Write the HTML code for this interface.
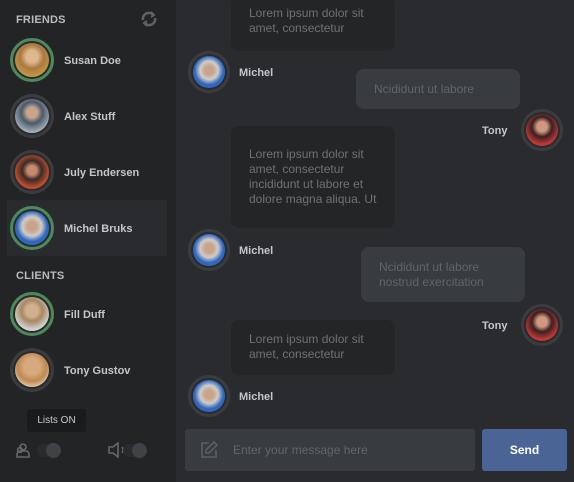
<!DOCTYPE html>
<html><head><meta charset="utf-8"><style>
*{margin:0;padding:0;box-sizing:border-box}
body{width:574px;height:482px;background:#2a2b2e;font-family:"Liberation Sans",sans-serif;position:relative;overflow:hidden}
.side{position:absolute;left:0;top:0;width:176px;height:482px;background:#232426}
.h{position:absolute;left:16px;font-size:11px;font-weight:bold;color:#b8bcc0;letter-spacing:.2px}
.av{position:absolute;width:44px;height:44px;border-radius:50%;border:3px solid #3a3c3f;background:#2a2b2e;padding:2px}
.av.on{border-color:#4c8a5a}
.av i{display:block;width:100%;height:100%;border-radius:50%}
.nm{position:absolute;font-size:11px;font-weight:bold;color:#c3c6ca}
.bub{position:absolute;font-size:12px;line-height:15px;color:#6e7276;border-radius:8px}
.l{background:#242527;padding:0 18px}
.r{background:#383c40;color:#60656a}
.sm{width:42px;height:42px}
</style></head><body>
<div class="side">
<div class="h" style="top:14px">FRIENDS</div>
<svg style="position:absolute;left:140px;top:10px" width="18" height="18" viewBox="0 0 18 18" fill="none" stroke="#5f6366" stroke-width="2.6"><path d="M3 10A6 6 0 0 1 13 4.5"/><path d="M15 8A6 6 0 0 1 5 13.5"/><path d="M11 2l3 3-3 2" stroke-width="2"/><path d="M7 16l-3-3 3-2" stroke-width="2"/></svg>
<div style="position:absolute;left:7px;top:200px;width:160px;height:56px;background:#2a2b2e"></div>
<div class="av on" style="left:10px;top:38px"><i style="background:radial-gradient(circle at 50% 40%,#e0b890 0 22%,#a87840 45%,#c8a048 80%)"></i></div>
<div class="nm" style="left:64px;top:55px">Susan Doe</div>
<div class="av" style="left:10px;top:94px"><i style="background:radial-gradient(circle at 50% 40%,#c8a48a 0 20%,#4a5a6a 40%,#a8b2ba 75%)"></i></div>
<div class="nm" style="left:64px;top:111px">Alex Stuff</div>
<div class="av" style="left:10px;top:150px"><i style="background:radial-gradient(circle at 50% 45%,#c88a6a 0 18%,#3a2a2a 38%,#c8502a 70%,#901818 90%)"></i></div>
<div class="nm" style="left:64px;top:167px">July Endersen</div>
<div class="av on" style="left:10px;top:206px"><i style="background:radial-gradient(circle at 50% 45%,#c8a48a 0 18%,#d0ccc8 38%,#3068c0 60%)"></i></div>
<div class="nm" style="left:64px;top:223px">Michel Bruks</div>
<div class="h" style="top:270px">CLIENTS</div>
<div class="av on" style="left:10px;top:292px"><i style="background:radial-gradient(circle at 50% 40%,#d0b090 0 22%,#a88860 40%,#d0d0d0 70%)"></i></div>
<div class="nm" style="left:64px;top:309px">Fill Duff</div>
<div class="av" style="left:10px;top:348px"><i style="background:radial-gradient(circle at 50% 40%,#d8a880 0 30%,#c08850 55%,#e0d0b8 80%)"></i></div>
<div class="nm" style="left:64px;top:365px">Tony Gustov</div>
<div style="position:absolute;left:27px;top:409px;width:59px;height:23px;background:#1a1b1c;border-radius:3px;color:#c8cacc;font-size:10px;text-align:center;line-height:23px">Lists ON</div>
<svg style="position:absolute;left:14px;top:441px" width="18" height="18" viewBox="0 0 18 18" fill="none" stroke="#64686c" stroke-width="1.6"><circle cx="9" cy="6" r="3"/><path d="M3 16v-3a3 3 0 0 1 3-3h6a3 3 0 0 1 3 3v3z"/><circle cx="6" cy="9" r="2.4"/></svg>
<div style="position:absolute;left:37px;top:444px;width:22px;height:13px;border-radius:7px;background:#2a2b2e"></div>
<div style="position:absolute;left:46px;top:443px;width:15px;height:15px;border-radius:50%;background:#3f4246"></div>
<svg style="position:absolute;left:107px;top:442px" width="20" height="16" viewBox="0 0 20 16" fill="none" stroke="#64686c" stroke-width="1.6"><path d="M2 5h4l5-4v14l-5-4H2z"/><path d="M15 5q2 3 0 6"/></svg>
<div style="position:absolute;left:123px;top:444px;width:22px;height:13px;border-radius:7px;background:#2a2b2e"></div>
<div style="position:absolute;left:132px;top:443px;width:15px;height:15px;border-radius:50%;background:#3f4246"></div>
</div>

<div class="bub l" style="left:231px;top:-4px;width:164px;height:55px;padding-top:10px">Lorem ipsum dolor sit amet, consectetur</div>
<div class="av sm" style="left:188px;top:51px"><i style="background:radial-gradient(circle at 50% 45%,#c8a48a 0 18%,#d0ccc8 38%,#3068c0 60%)"></i></div>
<div class="nm" style="left:239px;top:67px">Michel</div>
<div class="bub r" style="left:356px;top:69px;width:164px;height:40px;padding:13px 18px">Ncididunt ut labore</div>
<div class="nm" style="left:482px;top:125px">Tony</div>
<div class="av sm" style="left:521px;top:109px"><i style="background:radial-gradient(circle at 50% 40%,#d09880 0 20%,#3a2020 40%,#c03838 70%)"></i></div>
<div class="bub l" style="left:231px;top:126px;width:164px;height:102px;padding-top:21px">Lorem ipsum dolor sit amet, consectetur incididunt ut labore et dolore magna aliqua. Ut</div>
<div class="av sm" style="left:188px;top:229px"><i style="background:radial-gradient(circle at 50% 45%,#c8a48a 0 18%,#d0ccc8 38%,#3068c0 60%)"></i></div>
<div class="nm" style="left:239px;top:245px">Michel</div>
<div class="bub r" style="left:361px;top:247px;width:164px;height:55px;padding:13px 18px">Ncididunt ut labore nostrud exercitation</div>
<div class="nm" style="left:482px;top:320px">Tony</div>
<div class="av sm" style="left:521px;top:304px"><i style="background:radial-gradient(circle at 50% 40%,#d09880 0 20%,#3a2020 40%,#c03838 70%)"></i></div>
<div class="bub l" style="left:231px;top:320px;width:164px;height:55px;padding-top:12px">Lorem ipsum dolor sit amet, consectetur</div>
<div class="av sm" style="left:188px;top:375px"><i style="background:radial-gradient(circle at 50% 45%,#c8a48a 0 18%,#d0ccc8 38%,#3068c0 60%)"></i></div>
<div class="nm" style="left:239px;top:391px">Michel</div>

<div style="position:absolute;left:185px;top:429px;width:290px;height:42px;background:#383c40;border-radius:3px"></div>
<svg style="position:absolute;left:200px;top:441px" width="18" height="18" viewBox="0 0 18 18" fill="none" stroke="#5a5f64" stroke-width="1.6"><path d="M9 2H2v14h14V9"/><path d="M14 1l3 3-8 8H6V9z"/></svg>
<div style="position:absolute;left:233px;top:443px;font-size:12px;color:#61666b">Enter your message here</div>
<div style="position:absolute;left:482px;top:429px;width:85px;height:42px;background:#4a6595;border-radius:3px;color:#fff;font-size:12px;font-weight:bold;text-align:center;line-height:43px">Send</div>
</body></html>
